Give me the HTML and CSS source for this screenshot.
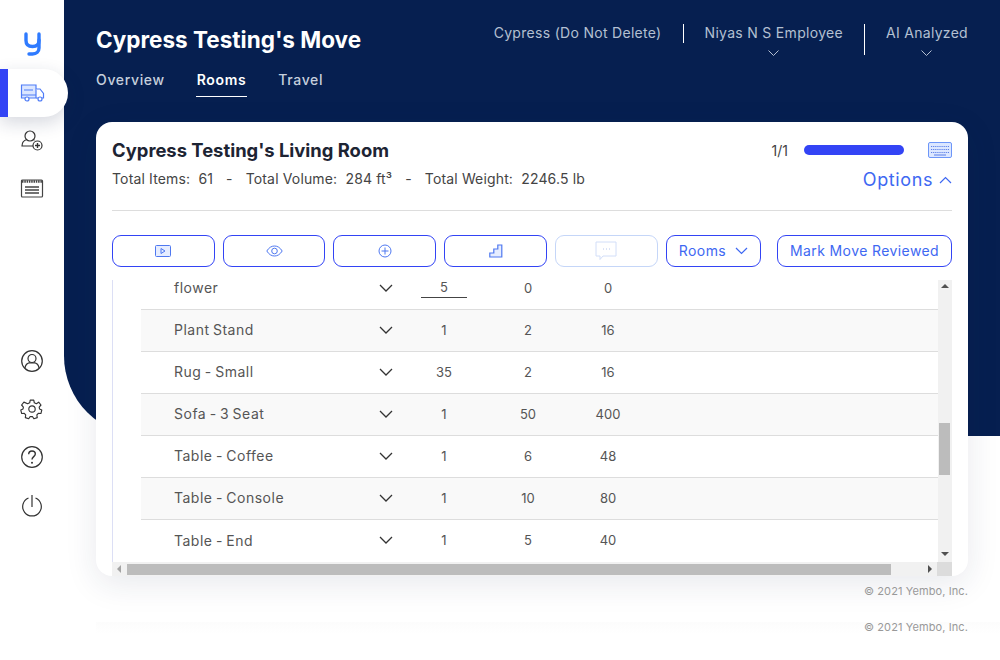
FILE: index.html
```html
<!doctype html>
<html lang="en">
<head>
  <meta charset="utf-8">
  <title>Cypress Testing's Move</title>
  <link rel="stylesheet" href="styles.css">
</head>
<body>
  <nav class="sidebar">
    <svg class="logo" width="17" height="24" viewBox="0 0 17 24" fill="none" stroke="#2f7bff" stroke-width="3.400" stroke-linecap="round">
      <path d="M2 2v6.500c0 4 2.500 6 6.500 6s6.500-2 6.500-6V2"/>
      <path d="M15 8v8c0 3.500-2.500 6-6.500 6H5"/>
    </svg>
    <div class="nav-active">
      <svg width="25" height="18" viewBox="0 0 25 18" fill="#dbe6ff" stroke="#4f7cf7" stroke-width="1.200">
        <path d="M5 14H1.500V1h14.500v13H9"/>
        <path d="M16 5h4l3.500 4.500V14h-1.500M18 14h-2" fill="#fff"/>
        <path d="M1.500 11H16M4 6h9" fill="none"/>
        <circle cx="7" cy="15" r="2" fill="#fff"/>
        <circle cx="20" cy="15" r="2" fill="#fff"/>
      </svg>
    </div>
    <svg class="nav-icon" width="24" height="24" viewBox="0 0 24 24" fill="none" stroke="#333" stroke-width="1.200">
      <circle cx="10" cy="7" r="5"/>
      <path d="M13 17H2c0-4 3-6 5-6.500M13 10.500c.5.200 1 .4 1.500.8"/>
      <circle cx="17.500" cy="16.500" r="4.500"/>
      <path d="M17.500 14v5M15 16.500h5" stroke-width="1.400"/>
    </svg>
    <svg class="nav-icon nav-icon-cal" width="24" height="20" viewBox="0 0 24 20" fill="none" stroke="#444" stroke-width="1.200">
      <rect x="1.500" y="2" width="21" height="17" rx="1"/>
      <path d="M2 3.500h20" stroke-width="2.500" stroke-dasharray="1.500 .8"/>
      <path d="M5 9h14M5 12h14M5 15h14" stroke-width="1.400"/>
    </svg>
    <div class="nav-bottom">
      <svg width="24" height="24" viewBox="0 0 24 24" fill="none" stroke="#333" stroke-width="1.200">
        <circle cx="12" cy="12" r="10.300"/>
        <circle cx="12" cy="9.500" r="4"/>
        <path d="M5 19c.5-3.500 3-5 5-5.300M19 19c-.5-3.500-3-5-5-5.300M8 14h8"/>
      </svg>
      <svg width="24" height="24" viewBox="-1.500 -1.500 27 27" fill="none" stroke="#333" stroke-width="1.300">
        <circle cx="12" cy="12" r="3.600"/>
        <path d="M10 2h4l.6 3 2.300 1 2.600-1.700 2.600 3.200-2 2.300.4 2.200 2.500 1.200-1 3.900-2.900-.2-1.600 1.800.4 3-3.800 1.300-1.600-2.500h-2.600l-1.600 2.500-3.800-1.300.4-3-1.600-1.800-2.900.2-1-3.900 2.500-1.200.4-2.200-2-2.300 2.600-3.200L7.100 6l2.300-1z" stroke-linejoin="round"/>
      </svg>
      <svg width="24" height="24" viewBox="0 0 24 24" fill="none" stroke="#333" stroke-width="1.200">
        <circle cx="12" cy="12" r="10.300"/>
        <path d="M8.700 9.300c0-2 1.500-3.300 3.300-3.300s3.300 1.300 3.300 3c0 2.500-3.300 2.800-3.300 5.500" stroke-width="1.400"/>
        <circle cx="12" cy="17.800" r="1" fill="#333" stroke="none"/>
      </svg>
      <svg width="24" height="24" viewBox="0 0 24 24" fill="none" stroke="#333" stroke-width="1.200">
        <path d="M8.500 5a9.300 9.300 0 1 0 7 0"/>
        <path d="M12 2v12"/>
      </svg>
    </div>
  </nav>

  <div class="main">
    <div class="hero"></div>
    <div class="content">
      <header class="head">
        <div class="head-left">
          <h1 class="title">Cypress Testing's Move</h1>
          <div class="tabs">
            <a class="tab">Overview</a>
            <a class="tab tab-on">Rooms</a>
            <a class="tab">Travel</a>
          </div>
        </div>
        <div class="filters">
          <div class="filter filter-first">Cypress (Do Not Delete)</div>
          <div class="filter filter-mid">Niyas N S Employee
            <svg width="11" height="6" viewBox="0 0 11 6" fill="none" stroke="#b4c0d2"><path d="M.5.500l5 5 5-5"/></svg>
          </div>
          <div class="filter filter-last">AI Analyzed
            <svg width="11" height="6" viewBox="0 0 11 6" fill="none" stroke="#b4c0d2"><path d="M.5.500l5 5 5-5"/></svg>
          </div>
        </div>
      </header>

      <section class="card">
        <div class="card-top">
          <div>
            <h2 class="room">Cypress Testing's Living Room</h2>
            <p class="stats">
              <span>Total Items:&nbsp; 61</span><span>-</span>
              <span>Total Volume:&nbsp; 284 ft³</span><span>-</span>
              <span>Total Weight:&nbsp; 2246.5 lb</span>
            </p>
          </div>
          <div class="card-side">
            <div class="progress">
              <span class="count">1/1</span>
              <span class="bar"></span>
              <svg width="24" height="16" viewBox="0 0 24 16" fill="#dce7ff" stroke="#6d96f8">
                <rect x=".5" y=".5" width="23" height="15" rx="1.500"/>
                <path d="M3 4.500h18M3 7.500h18M3 10.500h18" stroke="#5b7fe8" stroke-dasharray="1.200 .9"/>
                <path d="M6 13h12" stroke="#5b7fe8"/>
              </svg>
            </div>
            <div class="options">Options
              <svg width="13" height="8" viewBox="0 0 13 8" fill="none" stroke="#3e68f2" stroke-width="1.200"><path d="M1 7l5.500-5.500L12 7"/></svg>
            </div>
          </div>
        </div>

        <div class="toolbar">
          <div class="tools">
            <button class="btn">
              <svg width="16" height="12" viewBox="0 0 16 12" fill="#e6edff" stroke="#4f78f0"><rect x=".5" y=".5" width="15" height="11" rx="1"/><path d="M6 3.500v5l4-2.500z" fill="none"/></svg>
            </button>
            <button class="btn">
              <svg width="17" height="12" viewBox="0 0 17 12" fill="none" stroke="#4f78f0"><path d="M.8 6C3 2.500 5.500 1 8.500 1s5.500 1.500 7.700 5c-2.200 3.500-4.700 5-7.700 5S3 9.500.8 6z"/><circle cx="8.500" cy="6" r="2.800"/></svg>
            </button>
            <button class="btn">
              <svg width="14" height="14" viewBox="0 0 14 14" fill="none" stroke="#4f78f0"><circle cx="7" cy="7" r="6"/><path d="M7 3.500v7M3.500 7h7"/></svg>
            </button>
            <button class="btn">
              <svg width="14" height="14" viewBox="0 0 14 14" fill="#e6edff" stroke="#4f78f0" stroke-width="1.200"><path d="M.8 13V9h4V5h4V1h4v12z"/></svg>
            </button>
            <button class="btn btn-off">
              <svg width="22" height="20" viewBox="0 0 22 20" fill="none" stroke="#d2def8"><path d="M1 1h20v14H8l-3 3.500V15H1z"/><path d="M8 8h1M11 8h1M14 8h1" stroke="#b8c8ee"/></svg>
            </button>
          </div>
          <button class="btn btn-rooms">Rooms
            <svg width="13" height="8" viewBox="0 0 13 8" fill="none" stroke="#3e68f2" stroke-width="1.200"><path d="M1 1l5.500 5.500L12 1"/></svg>
          </button>
          <button class="btn btn-review">Mark Move Reviewed</button>
        </div>

        <div class="table-wrap">
          <div class="table">
            <div class="rows">
              <div class="row">
                <span class="name">flower</span>
                <svg width="14" height="8" viewBox="0 0 14 8" fill="none" stroke="#333" stroke-width="1.300"><path d="M1 1l6 6 6-6"/></svg>
                <span class="qty qty-edit">5</span><span class="num">0</span><span class="num num-last">0</span>
              </div>
              <div class="row row-alt">
                <span class="name">Plant Stand</span>
                <svg width="14" height="8" viewBox="0 0 14 8" fill="none" stroke="#333" stroke-width="1.300"><path d="M1 1l6 6 6-6"/></svg>
                <span class="qty">1</span><span class="num">2</span><span class="num num-last">16</span>
              </div>
              <div class="row">
                <span class="name">Rug - Small</span>
                <svg width="14" height="8" viewBox="0 0 14 8" fill="none" stroke="#333" stroke-width="1.300"><path d="M1 1l6 6 6-6"/></svg>
                <span class="qty">35</span><span class="num">2</span><span class="num num-last">16</span>
              </div>
              <div class="row row-alt">
                <span class="name">Sofa - 3 Seat</span>
                <svg width="14" height="8" viewBox="0 0 14 8" fill="none" stroke="#333" stroke-width="1.300"><path d="M1 1l6 6 6-6"/></svg>
                <span class="qty">1</span><span class="num">50</span><span class="num num-last">400</span>
              </div>
              <div class="row">
                <span class="name">Table - Coffee</span>
                <svg width="14" height="8" viewBox="0 0 14 8" fill="none" stroke="#333" stroke-width="1.300"><path d="M1 1l6 6 6-6"/></svg>
                <span class="qty">1</span><span class="num">6</span><span class="num num-last">48</span>
              </div>
              <div class="row row-alt">
                <span class="name">Table - Console</span>
                <svg width="14" height="8" viewBox="0 0 14 8" fill="none" stroke="#333" stroke-width="1.300"><path d="M1 1l6 6 6-6"/></svg>
                <span class="qty">1</span><span class="num">10</span><span class="num num-last">80</span>
              </div>
              <div class="row">
                <span class="name">Table - End</span>
                <svg width="14" height="8" viewBox="0 0 14 8" fill="none" stroke="#333" stroke-width="1.300"><path d="M1 1l6 6 6-6"/></svg>
                <span class="qty">1</span><span class="num">5</span><span class="num num-last">40</span>
              </div>
            </div>
          </div>
          <div class="vscroll">
            <span class="arrow arrow-up"></span>
            <span class="vthumb"></span>
            <span class="arrow arrow-down"></span>
          </div>
        </div>
        <div class="hscroll">
          <span class="arrow arrow-left"></span>
          <span class="hthumb"></span>
          <span class="arrow arrow-right"></span>
          <span class="corner"></span>
        </div>
      </section>

      <p class="copy">© 2021 Yembo, Inc.</p>
      <footer class="foot">© 2021 Yembo, Inc.</footer>
    </div>
  </div>
</body>
</html>
```

FILE: styles.css
```css
* {
  box-sizing: border-box;
}

html, body {
  height: 100%;
}

body {
  margin: 0;
  display: flex;
  overflow: hidden;
  background: #fff;
  color: #333;
  font-family: Inter, "Noto Sans", sans-serif;
}

h1, h2, p {
  margin: 0;
}

/* sidebar */
.sidebar {
  width: 64px;
  flex: none;
  display: flex;
  flex-direction: column;
  align-items: flex-start;
  position: relative;
  z-index: 2;
  background: #fff;
}

.logo {
  margin: 32px 0 0 24px;
  flex: none;
}

.nav-active {
  width: 68px;
  height: 48px;
  margin: 13px -4px 0 0;
  padding-left: 20px;
  display: flex;
  align-items: center;
  flex: none;
  background: #fff;
  border-left: 8px solid #3344f5;
  border-radius: 0 24px 24px 0;
  box-shadow: 0 6px 18px rgba(30, 40, 80, 0.18);
}

.nav-active svg {
  margin-left: -8px;
}

.nav-icon {
  margin: 12px 0 0 20px;
  flex: none;
}

.nav-icon-cal {
  margin-top: 25px;
}

.nav-bottom {
  margin: 151px 0 0 20px;
  display: flex;
  flex-direction: column;
  gap: 24px;
}

.nav-bottom svg {
  display: block;
}

/* main area: navy block sits behind the content */
.main {
  flex: 1;
  display: grid;
  min-width: 0;
}

.hero,
.content {
  grid-area: 1 / 1;
}

.hero {
  height: 436px;
  background: #061f50;
  border-bottom-left-radius: 80px;
}

.content {
  padding: 0 32px;
  position: relative;
}

.head {
  height: 122px;
  display: flex;
  justify-content: space-between;
}

.title {
  margin-top: 26px;
  font-size: 22.500px;
  line-height: 27px;
  font-weight: 700;
  color: #fff;
  white-space: nowrap;
}

.tabs {
  margin-top: 17px;
  display: flex;
  gap: 31px;
}

.tab {
  padding-bottom: 7px;
  font-size: 14px;
  line-height: 19px;
  font-weight: 500;
  letter-spacing: 0.65px;
  color: #c5cfdd;
}

.tab-on {
  padding: 0 1px 7px;
  color: #fff;
  font-weight: 600;
  border-bottom: 1px solid #fff;
}

.filters {
  display: flex;
  align-items: flex-start;
  margin-top: 24px;
  font-size: 14px;
  line-height: 18px;
  color: #b4c0d2;
  letter-spacing: 0.3px;
}

.filter {
  display: flex;
  flex-direction: column;
  align-items: center;
  white-space: nowrap;
}

.filter svg {
  margin-top: 8px;
  display: block;
  flex: none;
}

.filter-first {
  height: 19px;
  padding-right: 21px;
  border-right: 1px solid #fff;
}

.filter-mid {
  padding: 0 21px;
}

.filter-last {
  height: 31px;
  padding-left: 21px;
  border-left: 1px solid #fff;
}

/* card */
.card {
  height: 454px;
  padding: 16px 16px 0;
  display: flex;
  flex-direction: column;
  overflow: hidden;
  background: #fff;
  border-radius: 16px;
  box-shadow: 0 8px 32px rgba(30, 40, 80, 0.1);
}

.card-top {
  height: 73px;
  display: flex;
  justify-content: space-between;
  border-bottom: 1px solid #ddd;
}

.room {
  font-size: 18.400px;
  line-height: 24px;
  font-weight: 700;
  color: #1d2433;
  white-space: nowrap;
}

.stats {
  margin-top: 8px;
  display: flex;
  gap: 13px;
  font-size: 14px;
  line-height: 18px;
  letter-spacing: 0.15px;
  color: #444;
}

.card-side {
  display: flex;
  flex-direction: column;
  align-items: flex-end;
}

.progress {
  height: 24px;
  display: flex;
  align-items: center;
}

.count {
  font-size: 14px;
  color: #444;
}

.bar {
  width: 100px;
  height: 10px;
  margin: 0 24px 0 16px;
  background: #3344f5;
  border-radius: 5px;
}

.options {
  margin-top: 7px;
  display: flex;
  align-items: center;
  gap: 6px;
  font-size: 18px;
  line-height: 22px;
  letter-spacing: 0.6px;
  color: #3e68f2;
}

.toolbar {
  margin-top: 24px;
  height: 32px;
  display: flex;
  gap: 8px;
}

.tools {
  width: 545.600px;
  display: flex;
  gap: 8px;
}

.btn {
  height: 32px;
  padding: 0;
  display: flex;
  align-items: center;
  justify-content: center;
  flex: 1;
  background: #fff;
  border: 1px solid #3344f5;
  border-radius: 9px;
  font-family: inherit;
  font-size: 14px;
  letter-spacing: 0.4px;
  color: #3e68f2;
}

.btn-off {
  border-color: #c5d6f8;
}

.btn-rooms {
  flex: none;
  width: 95px;
  margin-left: 0.4px;
  padding-bottom: 2px;
  gap: 9px;
}

.btn-rooms svg {
  margin-top: 2px;
}

.btn-review {
  flex: none;
  width: 175px;
  margin-left: auto;
  padding-bottom: 2px;
}

/* table */
.table-wrap {
  margin-top: 13px;
  height: 282px;
  display: flex;
}

.table {
  flex: 1;
  padding-left: 28px;
  overflow: hidden;
  border-left: 1px solid #dcdff5;
}

.rows {
  margin-top: -12px;
}

.row {
  height: 42px;
  padding-left: 33px;
  padding-bottom: 2px;
  display: grid;
  grid-template-columns: 202px 20px 96px 72px 88px;
  align-items: center;
  font-size: 14px;
  color: #555;
  border-bottom: 1px solid #ddd;
}

.row:last-child {
  border-bottom: 0;
}

.row svg {
  justify-self: center;
}

.row-alt {
  background: #f9f9f9;
}

.name {
  letter-spacing: 0.5px;
  word-spacing: -1px;
}

.qty,
.num {
  font-size: 13px;
  text-align: center;
}

.qty-edit {
  width: 46px;
  height: 19px;
  justify-self: center;
  margin-top: 2px;
  border-bottom: 1px solid #444;
}

.vscroll {
  width: 14px;
  flex: none;
  position: relative;
  background: #f1f1f1;
}

.vthumb {
  position: absolute;
  left: 1px;
  top: 143px;
  width: 11px;
  height: 52px;
  background: #bcbcbc;
}

.hscroll {
  height: 14px;
  flex: none;
  display: flex;
  align-items: center;
  background: #f1f1f1;
}

.hthumb {
  width: 764px;
  height: 11px;
  margin-left: 6px;
  background: #bcbcbc;
}

.corner {
  width: 15px;
  height: 14px;
  margin-left: auto;
  background: #dcdcdc;
}

.arrow {
  width: 0;
  height: 0;
  display: block;
  border: 4px solid transparent;
}

.vscroll .arrow {
  position: absolute;
  left: 3px;
}

.arrow-up {
  top: 0;
  border-bottom-color: #505050;
}

.vscroll .arrow-down {
  bottom: 2px;
  border-top-color: #505050;
}

.arrow-left {
  margin-left: 1px;
  border-right-color: #a3a3a3;
}

.arrow-right {
  margin-left: 37px;
  border-left-color: #505050;
}

.copy,
.foot {
  font-size: 11px;
  line-height: 14px;
  letter-spacing: 0.1px;
  text-align: right;
  color: #999;
}

.copy {
  margin-top: 8px;
}

.foot {
  margin: 22px -32px 0 0;
  padding-right: 32px;
  background: linear-gradient(#fff 2px, #fcfcfc 2px, #fff 14px);
}
```
